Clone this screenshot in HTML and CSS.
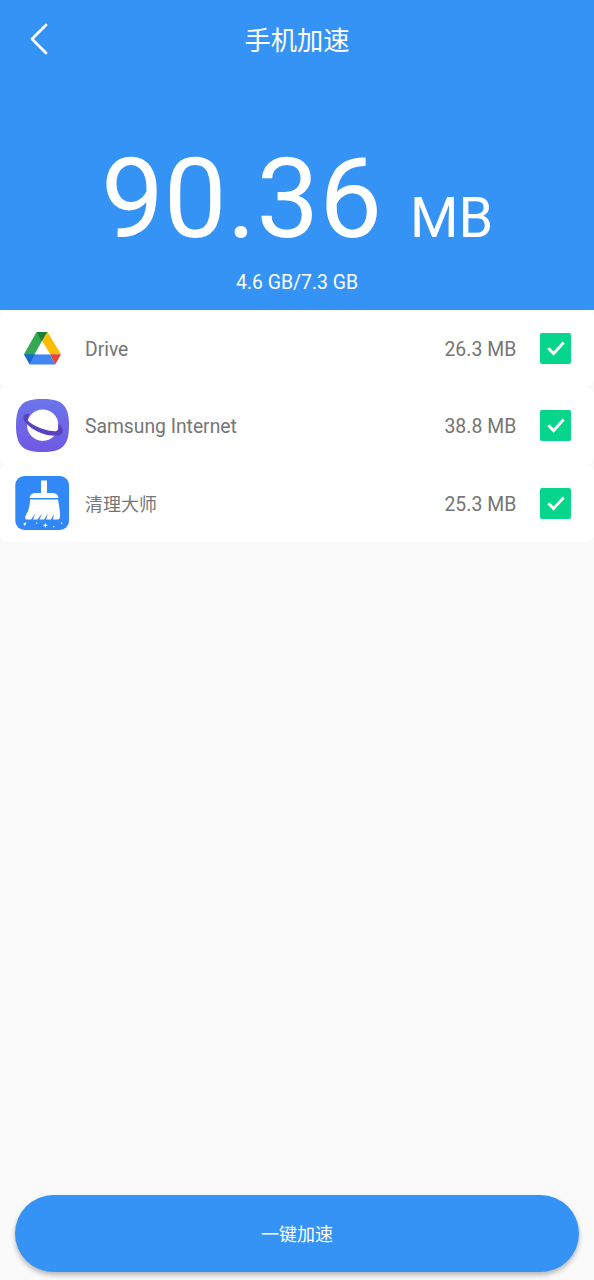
FILE: index.html
```
<!DOCTYPE html>
<html lang="zh-CN">
<head>
<meta charset="utf-8">
<title>手机加速</title>
<link rel="stylesheet" href="styles.css">
</head>
<body>
<main class="screen">
  <header class="hero">
    <nav class="topbar">
      <svg class="back" viewBox="0 0 20 32"><path d="M17 2 3 16 17 30"/></svg>
      <h1 class="title">手机加速</h1>
    </nav>
    <div class="total"><span class="amount">90.36 </span><span class="unit">MB</span></div>
    <div class="memory"><span>4.6 GB/7.3 GB</span></div>
  </header>
  <ul class="apps">
    <li class="app">
      <svg class="icon" viewBox="0 0 54 54">
        <path fill="#34a853" d="M21.500 10 9 32.200l5.800 10.300L28 19.500z"/>
        <path fill="#188038" d="M21.500 10h11L27 19.500z"/>
        <path fill="#fbbc04" d="M32.500 10 46 32.200H35L27 19z"/>
        <path fill="#1967d2" d="M9 32.200h11l-5.200 10.300z"/>
        <path fill="#4285f4" d="M20 32.200h15l5.200 10.300H14.800z"/>
        <path fill="#ea4335" d="M35 32.200h11l-5.800 10.300z"/>
        <path fill="#fff" d="m27 19 8 13.200H19.500z"/>
      </svg>
      <span class="name">Drive</span><span class="size">26.3 MB</span>
      <svg class="check" viewBox="0 0 31 31"><path d="m8.300 15.300 5.300 5.300L23.600 9.500"/></svg>
    </li>
    <li class="app">
      <svg class="icon" viewBox="0 0 54 54">
        <defs><linearGradient id="violet" x2="0" y2="1"><stop stop-color="#6b75ec"/><stop offset="1" stop-color="#7059e2"/></linearGradient></defs>
        <path fill="url(#violet)" d="M27.500 0C47.500 0 54 6.500 54 26.500S47.500 53 27.500 53 1 46.500 1 26.500 7.500 0 27.500 0z"/>
        <circle cx="27.700" cy="26.200" r="15.700" fill="#fff"/>
        <path fill="#5a42c2" d="M14.800 15C8.500 13.500 6.500 18 10.200 23.500 17.500 32 32 37.500 41.500 36.800c6.500-.5 8-5 4-10.300l-2.500-2.200c.5 2 .6 4 .2 6.200-.7 1.700-3 2-6 1.600C27 30.500 18.500 27 12.600 21.500c.2-2.500 1-4.500 2.200-6.500z"/>
      </svg>
      <span class="name">Samsung Internet</span><span class="size">38.8 MB</span>
      <svg class="check" viewBox="0 0 31 31"><path d="m8.300 15.300 5.300 5.300L23.600 9.500"/></svg>
    </li>
    <li class="app">
      <svg class="icon" viewBox="0 0 54 54">
        <rect x=".3" width="53.700" height="54" rx="9" fill="#3388f8"/>
        <g fill="#fff">
          <path d="M26 4.500h6V17h5q6 0 6.500 5H14.500q.5-5 6.500-5h5z"/>
          <path d="M15 23.500h28c1 6 2.500 13 2 17.500q-.2 2.500-2.500 2.500H38l1-6-3 6h-5l2-6-4 6h-4.500l2.500-6-4.500 6h-4.500l2.500-6-4.500 6h-4q-3 0-1-4.500C14 34 15 29 15 23.500z"/>
          <path d="m8.500 47.500 3-1.500-1 3-1.500.8zM21 46.500h1.300v1.300H21zM29.800 47.500H31v1.300h1.300V50H31v1.300h-1.200V50h-1.300v-1.200h1.300zM38 50h1.300v1.300H38zM46 46.500h1.300v1.300H46z"/>
        </g>
      </svg>
      <span class="name name-cjk">清理大师</span><span class="size">25.3 MB</span>
      <svg class="check" viewBox="0 0 31 31"><path d="m8.300 15.300 5.300 5.300L23.600 9.500"/></svg>
    </li>
  </ul>
  <footer class="footer"><button class="boost" type="button">一键加速</button></footer>
</main>
</body>
</html>
```
FILE: styles.css
```
* { box-sizing: border-box; }
body { margin: 0; font-family: Roboto, "Noto Sans CJK SC", sans-serif; }
.screen { display: flex; flex-direction: column; height: 1280px; background: #fafafa; overflow: hidden; }
.hero { height: 310px; background: #3693f6; color: #fff; }
.topbar { display: grid; grid-template-columns: 78px 1fr 78px; align-items: center; height: 78px; }
.back { width: 20px; height: 32px; margin-left: 29px; fill: none; stroke: #fff; stroke-width: 2.8; stroke-linecap: round; stroke-linejoin: round; }
.title { margin: 0; padding-top: 3px; text-align: center; font-size: 26.300px; font-weight: 400; line-height: 40px; }
.total { height: 132px; margin-top: 55px; text-align: center; white-space: pre; line-height: 132px; }
.amount { font-size: 112px; }
.unit { font-size: 55.500px; }
.memory { height: 36px; text-align: center; font-size: 19.400px; line-height: 36px; }
.apps { margin: 0; padding: 0; list-style: none; }
.app { display: flex; align-items: center; height: 77.330px; padding: 0 23px 0 15px; border-radius: 8px; background: #fff; color: #757575; font-size: 19.300px; }
.icon { width: 54px; height: 54px; margin-right: 16px; }
.name { flex: 1; padding-top: 1px; }
.name-cjk { padding: 0; font-size: 18px; }
.size { padding-top: 2px; font-size: 19.400px; letter-spacing: .05px; }
.check { width: 31px; height: 31px; margin-left: 23.600px; border-radius: 2px; background: #05d68b; fill: none; stroke: #fff; stroke-width: 2.800; }
.footer { margin-top: auto; padding: 0 15px 8px; }
.boost { display: block; width: 100%; height: 77px; padding: 2px 0 0; border: 0; border-radius: 39px; background: #3693f6; color: #fff; font: 18px/75px Roboto, "Noto Sans CJK SC", sans-serif; box-shadow: 0 3px 5px rgba(0,0,0,.28); }
```
